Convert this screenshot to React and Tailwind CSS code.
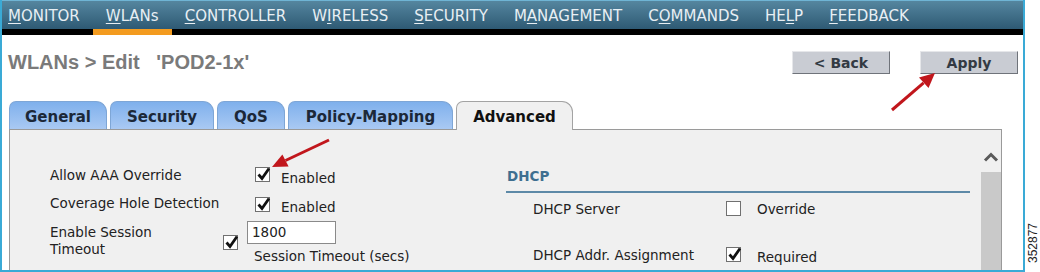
import React from "react";

const NAV = [
  { pre: "", u: "M", post: "ONITOR" },
  { pre: "", u: "W", post: "LANs", active: true },
  { pre: "", u: "C", post: "ONTROLLER" },
  { pre: "W", u: "I", post: "RELESS" },
  { pre: "", u: "S", post: "ECURITY" },
  { pre: "M", u: "A", post: "NAGEMENT" },
  { pre: "C", u: "O", post: "MMANDS" },
  { pre: "HE", u: "L", post: "P" },
  { pre: "", u: "F", post: "EEDBACK" },
];

const TABS = [
  { label: "General", w: "w-[98px]" },
  { label: "Security", w: "w-[104px]" },
  { label: "QoS", w: "w-[68px]" },
  { label: "Policy-Mapping", w: "w-[165px]" },
];

function Box({ checked, className = "" }) {
  return (
    <div className={"relative w-[15px] h-[15px] shrink-0 border border-[#707070] bg-white " + className}>
      {checked && (
        <svg className="absolute -left-px -top-[2px] overflow-visible" width="17" height="17" viewBox="0 0 17 17">
          <path d="M3.5 8.5 L7 12.5 L14 2.5" fill="none" stroke="#111" strokeWidth="2.8" strokeLinejoin="miter" />
        </svg>
      )}
    </div>
  );
}

export default function App() {
  return (
    <div className="relative flex w-[1040px] h-[272px] bg-white overflow-hidden font-['DejaVu_Sans',Verdana,sans-serif]">
      {/* main frame */}
      <div className="flex flex-col w-[1025px] h-[272px] border-x-2 border-b-2 border-[#3aaad6]">
        {/* nav */}
        <div className="flex">
          {NAV.map((n, i) => (
            <div key={i} className="flex flex-col">
              <div
                className={[
                  "h-[29px] leading-[30px] text-[15px] text-[#e8eff4] bg-gradient-to-b from-[#55869f] to-[#2e5a74] border-t border-[#6fb4d4] whitespace-nowrap",
                  i === 0 ? "pl-[6px] pr-[13px]" : "px-[13px]",
                ].join(" ")}
              >
                {n.pre}
                <span className="underline underline-offset-2">{n.u}</span>
                {n.post}
              </div>
              <div className={n.active ? "h-[6px] bg-[#f39b1f]" : "h-[6px] bg-black"} />
            </div>
          ))}
          <div className="flex-1 flex flex-col">
            <div className="h-[29px] bg-gradient-to-b from-[#55869f] to-[#2e5a74] border-t border-[#6fb4d4]" />
            <div className="h-[6px] bg-black" />
          </div>
        </div>

        {/* title row */}
        <div className="flex items-start justify-between pt-[15px] pl-[6px] pr-[5px] h-[40px]">
          <div className="font-['Liberation_Sans',Arial,sans-serif] font-bold text-[20px] leading-[24px] text-[#7a7a7a] whitespace-pre">
            {"WLANs > Edit   'POD2-1x'"}
          </div>
          <div className="flex gap-[30px] mt-px">
            <button className="w-[98px] h-[23px] bg-[#c9ccd3] border border-t-[#e6e7ea] border-l-[#e6e7ea] border-b-[#6f737a] border-r-[#6f737a] font-bold text-[14px] text-[#333a44] leading-[20px]">
              &lt; Back
            </button>
            <button className="w-[98px] h-[23px] bg-[#c9ccd3] border border-t-[#e6e7ea] border-l-[#e6e7ea] border-b-[#6f737a] border-r-[#6f737a] font-bold text-[14px] text-[#333a44] leading-[20px]">
              Apply
            </button>
          </div>
        </div>

        {/* tabs */}
        <div className="flex items-end gap-[3px] pl-[7px] mt-[26px] relative z-10">
          {TABS.map((t) => (
            <div
              key={t.label}
              className={
                t.w +
                " h-[28px] rounded-tl-[7px] rounded-tr-[11px] border border-b-0 border-[#7ea6d6] bg-gradient-to-b from-[#7fb0ec] to-[#a9c9f3] text-center font-bold text-[15px] leading-[30px] text-[#1c2838]"
              }
            >
              {t.label}
            </div>
          ))}
          <div className="w-[117px] h-[29px] -mb-px rounded-tl-[7px] rounded-tr-[11px] border border-b-0 border-[#a3a3a3] bg-[#f0f0f0] text-center font-bold text-[15px] leading-[30px] text-[#111]">
            Advanced
          </div>
        </div>

        {/* panel */}
        <div className="flex flex-1 ml-[7px] w-[993px] border border-b-0 border-[#9a9a9a] bg-[#f0f0f0] text-[13.5px] text-[#222]">
          {/* left column */}
          <div className="w-[496px] pt-[31px] pl-[40px]">
            <div className="flex h-[28px]">
              <div className="w-[205px] leading-[28px]">Allow AAA Override</div>
              <Box checked className="mt-[6px]" />
              <div className="ml-[11px] mt-[3px] leading-[28px]">Enabled</div>
            </div>
            <div className="flex h-[28px]">
              <div className="w-[205px] leading-[28px]">Coverage Hole Detection</div>
              <Box checked className="mt-[8px]" />
              <div className="ml-[11px] mt-[4px] leading-[28px]">Enabled</div>
            </div>
            <div className="flex">
              <div className="w-[173px] mt-[7px] leading-[17px]">
                Enable Session
                <br />
                Timeout
              </div>
              <Box checked className="mt-[18px]" />
              <div className="ml-[9px] mt-[4px] flex flex-col">
                <div className="w-[89px] h-[23px] border border-[#8a8a8a] bg-white pl-[4px] leading-[21px]">1800</div>
                <div className="ml-[7px] mt-[3px] leading-[18px]">Session Timeout (secs)</div>
              </div>
            </div>
          </div>

          {/* right column */}
          <div className="w-[464px] pt-[36px]">
            <div className="pl-px pb-[5px] border-b-2 border-[#5d89a7] font-bold text-[#3e6f90] leading-[20px]">DHCP</div>
            <div className="flex pl-[27px] mt-[4px] h-[24px]">
              <div className="w-[193px] leading-[24px]">DHCP Server</div>
              <Box className="mt-[4px]" />
              <div className="ml-[16px] leading-[24px]">Override</div>
            </div>
            <div className="flex pl-[27px] mt-[22px] h-[24px]">
              <div className="w-[193px] leading-[24px]">DHCP Addr. Assignment</div>
              <Box checked className="mt-[4px]" />
              <div className="ml-[16px] mt-[2px] leading-[24px]">Required</div>
            </div>
          </div>

          <div className="flex-1" />

          {/* scrollbar */}
          <div className="w-[20px] flex flex-col items-center">
            <svg className="mt-[22px]" width="16" height="10" viewBox="0 0 16 10">
              <path d="M2 8.5 L8 2.5 L14 8.5" fill="none" stroke="#5a5a5a" strokeWidth="3" />
            </svg>
            <div className="mt-[10px] w-full flex-1 bg-[#c9c9c9]" />
          </div>
        </div>
      </div>

      {/* right margin with figure number */}
      <div className="flex-1 flex items-end justify-center pb-[9px]">
        <div className="[writing-mode:vertical-rl] rotate-180 font-['Liberation_Sans',Arial,sans-serif] text-[12px] leading-[12px] text-[#222]">
          352877
        </div>
      </div>

      {/* red annotation arrows */}
      <svg className="absolute left-0 top-0 pointer-events-none" width="1040" height="272" viewBox="0 0 1040 272">
        <line x1="329" y1="140" x2="285.5" y2="160.5" stroke="#c1161c" strokeWidth="3" />
        <polygon points="272,167 288.6,166.6 282.4,154.4" fill="#c1161c" />
        <line x1="892" y1="110" x2="923.6" y2="82.8" stroke="#c1161c" strokeWidth="3" />
        <polygon points="935,73 928.5,88 919,77.6" fill="#c1161c" />
      </svg>
    </div>
  );
}
